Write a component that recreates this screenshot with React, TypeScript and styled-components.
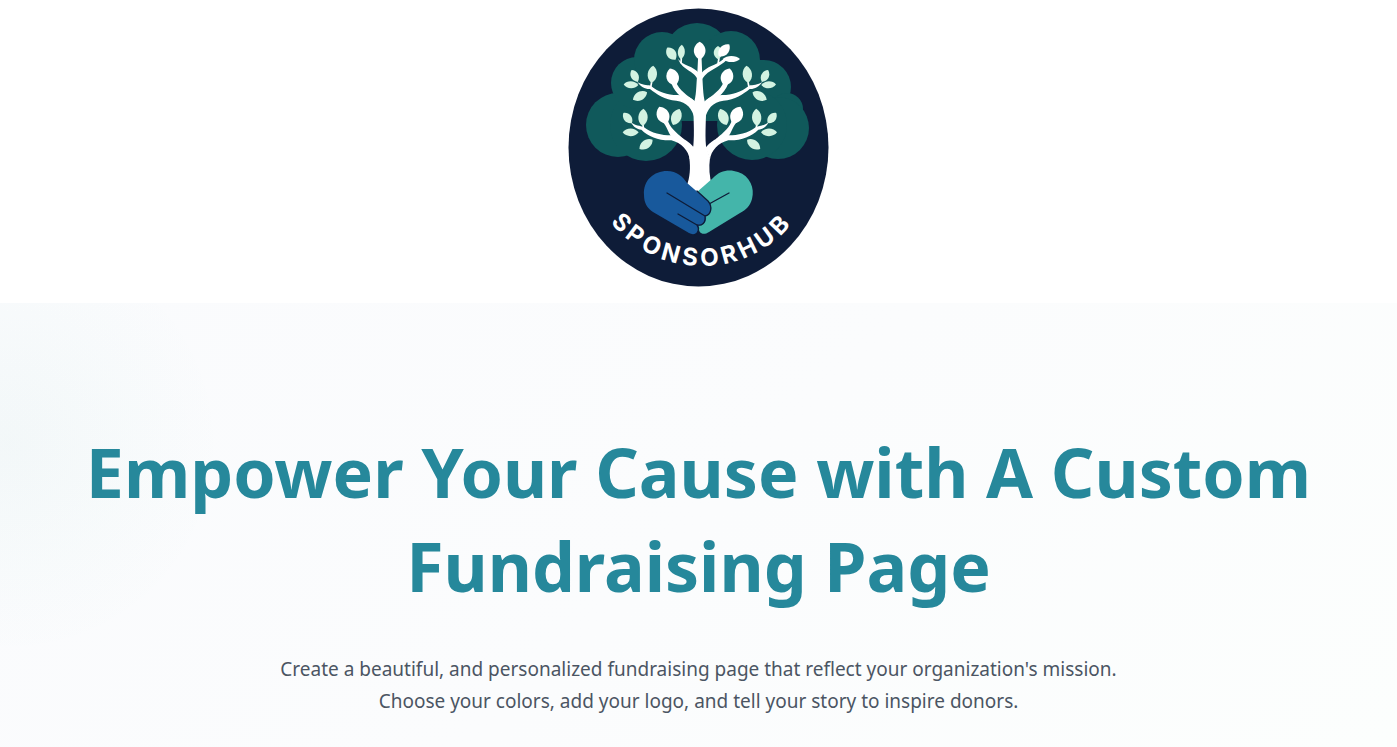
import React from "react";
import styled, { createGlobalStyle } from "styled-components";

const GlobalStyle = createGlobalStyle`
  *, *::before, *::after { box-sizing: border-box; }
  body {
    margin: 0;
    background: #ffffff;
    font-family: "Noto Sans", "Open Sans", sans-serif;
  }
`;

const Page = styled.div`
  min-height: 100vh;
  display: flex;
  flex-direction: column;
`;

const Header = styled.header`
  display: flex;
  justify-content: center;
  padding: 8px 16px 16px;
`;

const Logo = styled.svg`
  display: block;
  width: 261px;
  height: 279px;
`;

const LogoLettering = styled.text`
  font-family: Inter, sans-serif;
  font-size: 24px;
  font-weight: 700;
  letter-spacing: 4px;
  fill: #ffffff;
`;

const Hero = styled.main`
  flex: 1;
  display: flex;
  flex-direction: column;
  align-items: center;
  gap: 40px;
  padding: 122px 64px 32px;
  text-align: center;
  background:
    radial-gradient(circle at 10px 140px, rgba(38, 150, 130, 0.035), rgba(38, 180, 140, 0.015) 120px, transparent 215px),
    linear-gradient(135deg, #fafbfd 0%, #fbfcfd 50%, #fcfefd 100%);
`;

const Title = styled.h1`
  max-width: 1280px;
  margin: 0;
  font-size: 68px;
  line-height: 94px;
  font-weight: 700;
  color: #26889b;
`;

const Lead = styled.p`
  max-width: 864px;
  margin: 0;
  font-size: 19px;
  line-height: 32px;
  color: #4b5563;
`;

type LeafProps = { x: number; y: number; l: number; w: number; r: number; fill?: string };

const PALE = "#d3f3e2";
const WHITE = "#ffffff";

// A pointed leaf centred on x, y; l and w are half its length and width.
function Leaf({ x, y, l, w, r, fill = PALE }: LeafProps) {
  return (
    <path
      transform={`translate(${x} ${y}) rotate(${r})`}
      fill={fill}
      d={`M0 ${-l} C${w * 1.4} ${-l * 0.6} ${w * 1.7} ${l * 0.45} 0 ${l} C${-w * 1.7} ${l * 0.45} ${-w * 1.4} ${-l * 0.6} 0 ${-l}Z`}
    />
  );
}

const sideLeaves: LeafProps[] = [
  { x: 50, y: 120, l: 20, w: 10, r: -28 },
  { x: 103, y: 115, l: 26, w: 12, r: 6 },
  { x: 39, y: 146, l: 22, w: 9, r: -88 },
  { x: 66, y: 180, l: 24, w: 11, r: 62 },
  { x: 164, y: 123, l: 27, w: 16, r: -18, fill: WHITE },
  { x: 29, y: 246, l: 20, w: 10, r: -40 },
  { x: 75, y: 244, l: 26, w: 12, r: 3 },
  { x: 38, y: 289, l: 24, w: 10, r: -90 },
  { x: 84, y: 325, l: 24, w: 11, r: 55 },
  { x: 135, y: 238, l: 28, w: 16, r: -24, fill: WHITE },
  { x: 175, y: 243, l: 26, w: 13, r: 22 },
];

function TreeSide() {
  return (
    <g>
      <g fill={WHITE}>
        <path d="M58 138C72 148 86 146 98 149C122 168 148 177 178 177C208 179 224 184 236 205L230 250C224 218 206 198 175 194C140 192 115 174 96 159C82 160 68 152 58 138Z" />
        <path d="M160 142L174 138C184 164 206 176 236 200L230 215C202 192 172 176 160 142Z" />
        <path d="M38 258C52 270 66 268 78 274C102 294 138 299 165 298C195 303 214 318 228 335L215 370C212 345 190 320 160 313C120 314 92 302 70 281C56 280 46 272 38 258Z" />
        <path d="M134 258L148 250C155 274 172 288 198 310L162 304C150 290 148 272 134 258Z" />
      </g>
      <path d="M101 138L98 154M75 266L76 278" stroke={WHITE} strokeWidth="5" />
      {sideLeaves.map((leaf, i) => (
        <Leaf key={i} {...leaf} />
      ))}
    </g>
  );
}

function SponsorHubLogo() {
  return (
    <Logo viewBox="568 8 261 279" role="img" aria-label="SponsorHub">
      <defs>
        <path id="lettering-arc" d="M585 149A117 117 0 0 0 819 149" />
      </defs>
      <ellipse cx="698.500" cy="147.500" rx="130" ry="139" fill="#0e1c38" />
      <g fill="#10595b">
        <circle cx="618" cy="125" r="32" />
        <circle cx="646" cy="125" r="36" />
        <circle cx="637" cy="83" r="26" />
        <circle cx="662" cy="60" r="28" />
        <circle cx="697" cy="56" r="33" />
        <circle cx="731" cy="60" r="29" />
        <circle cx="764" cy="87" r="27" />
        <circle cx="787" cy="109" r="16" />
        <circle cx="778" cy="128" r="31" />
        <circle cx="752" cy="125" r="35" />
        <path d="M636 60H764V121H636Z" />
      </g>
      <g transform="translate(618 36) scale(.33333)">
        <path
          fill={WHITE}
          d="M241 50H250L253 120C255 160 256 185 263 205C266 240 260 290 264 330L276 366C272 395 274 420 282 450L246 482L206 450C216 425 218 395 214 366L226 330C230 290 226 245 226 205C236 180 234 150 238 110Z"
        />
        <TreeSide />
        <g transform="translate(491 0) scale(-1 1)">
          <TreeSide />
        </g>
        <path
          fill={WHITE}
          d="M180 68C196 92 226 88 243 112L250 112C268 88 290 92 318 68L328 70C304 96 272 100 253 128H238C226 102 194 104 180 68Z"
        />
        <path d="M190 66L189 82M303 66L300 84" stroke={WHITE} strokeWidth="5" />
        <Leaf x={160} y={53} l={22} w={12} r={-35} />
        <Leaf x={190} y={48} l={22} w={9} r={4} />
        <Leaf x={245} y={44} l={27} w={15} r={0} fill={WHITE} />
        <Leaf x={300} y={50} l={20} w={11} r={0} />
        <Leaf x={318} y={43} l={24} w={12} r={42} fill={WHITE} />
        <Leaf x={340} y={69} l={26} w={8} r={90} fill={WHITE} />
      </g>
      <path
        fill="#44b5aa"
        d="M697 192L713 178C720 170 730 169 738 172C750 176 755 188 752 199C750 206 746 210 740 213L709 232C703 236 698 233 699 227Z"
      />
      <path d="M709 204L729 193" stroke="#0e1c38" strokeWidth="1.300" strokeLinecap="round" />
      <path
        fill="#18599c"
        d="M644 195C643 180 654 171 667 171C677 171 683 177 687 183L708 201C713 206 712 214 706 216C707 222 703 225 699 226C700 233 694 236 689 233L653 212C647 208 644 203 644 195Z"
      />
      <path
        d="M697 191L708 201C713 207 711 215 705 216L667 193M705 216C706 223 702 226 697 225L678 214M697 225C700 229 698 233 695 235"
        fill="none"
        stroke="#0e1c38"
        strokeWidth="1.300"
        strokeLinecap="round"
        strokeLinejoin="round"
      />
      <LogoLettering textAnchor="middle">
        <textPath href="#lettering-arc" startOffset="50%">
          SPONSORHUB
        </textPath>
      </LogoLettering>
    </Logo>
  );
}

export default function App() {
  return (
    <Page>
      <GlobalStyle />
      <Header>
        <SponsorHubLogo />
      </Header>
      <Hero>
        <Title>Empower Your Cause with A Custom Fundraising Page</Title>
        <Lead>
          Create a beautiful, and personalized fundraising page that reflect your
          organization's mission. Choose your colors, add your logo, and tell your story to
          inspire donors.
        </Lead>
      </Hero>
    </Page>
  );
}
